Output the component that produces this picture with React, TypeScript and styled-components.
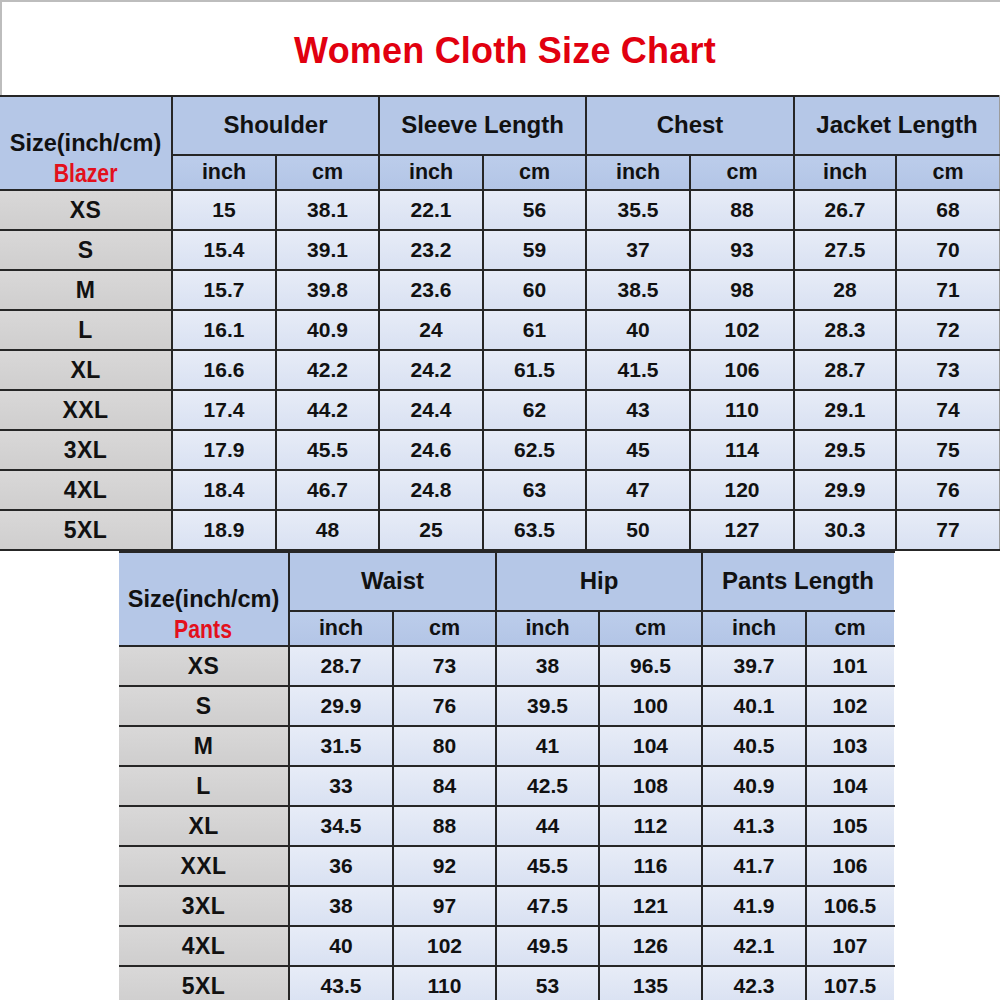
import React from 'react';
import styled, { createGlobalStyle } from 'styled-components';

const GlobalStyle = createGlobalStyle`
  html, body { margin: 0; padding: 0; background: #ffffff; }
  body { font-family: "Liberation Sans", Arial, sans-serif; }
`;

const Page = styled.div`
  width: 1000px;
  height: 1000px;
  overflow: hidden;
  background: #ffffff;
  display: flex;
  flex-direction: column;
`;

const TitleBar = styled.div`
  flex: none;
  height: 95px;
  box-sizing: border-box;
  border-top: 2px solid #bdbdbd;
  border-left: 2px solid #bdbdbd;
  display: flex;
  align-items: center;
  justify-content: center;
  padding-left: 8px;
  padding-top: 4px;
`;

const Title = styled.h1`
  margin: 0;
  font-size: 36px;
  font-weight: 700;
  color: #e1000f;
  letter-spacing: 0.2px;
`;

const Table = styled.table<{ $width: number; $offset: number; $edge: string }>`
  border-collapse: collapse;
  table-layout: fixed;
  width: ${p => p.$width}px;
  margin-left: ${p => p.$offset}px;
  flex: none;
  & td:last-child { border-right: 2px solid ${p => p.$edge}; }
`;

const Col = styled.col<{ $w: number }>`
  width: ${p => p.$w}px;
`;

const Row = styled.tr<{ $h: number }>`
  height: ${p => p.$h}px;
`;

const BaseCell = styled.td`
  border: 2px solid #262626;
  padding: 0;
  text-align: center;
  font-weight: 700;
  color: #111111;
  white-space: nowrap;
  &:first-child { border-left: none; }
`;

const SizeHead = styled(BaseCell)`
  background: #b5c7e7;
  vertical-align: top;
  padding-top: 31px;
  font-size: 23.5px;
  line-height: 30px;
`;

const Category = styled.span`
  display: inline-block;
  color: #e3101c;
  font-size: 25px;
  transform: scaleX(0.85);
  transform-origin: center;
`;

const GroupHead = styled(BaseCell)`
  background: #b5c7e7;
  font-size: 24px;
`;

const UnitHead = styled(BaseCell)`
  background: linear-gradient(#bccdeb, #b3c5e6);
  font-size: 21.5px;
`;

const SizeCell = styled(BaseCell)`
  background: linear-gradient(#d9d8d8, #cfcece);
  font-size: 23px;
  letter-spacing: 0.4px;
`;

const DataCell = styled(BaseCell)`
  background: linear-gradient(#e7ecf7, #d9e1f2);
  font-size: 21px;
`;

type Group = string;

const blazerGroups: Group[] = ['Shoulder', 'Sleeve Length', 'Chest', 'Jacket Length'];
const blazerCols = [172, 104, 103, 104, 103, 104, 104, 102, 104];
const blazerRows: string[][] = [
  ['XS', '15', '38.1', '22.1', '56', '35.5', '88', '26.7', '68'],
  ['S', '15.4', '39.1', '23.2', '59', '37', '93', '27.5', '70'],
  ['M', '15.7', '39.8', '23.6', '60', '38.5', '98', '28', '71'],
  ['L', '16.1', '40.9', '24', '61', '40', '102', '28.3', '72'],
  ['XL', '16.6', '42.2', '24.2', '61.5', '41.5', '106', '28.7', '73'],
  ['XXL', '17.4', '44.2', '24.4', '62', '43', '110', '29.1', '74'],
  ['3XL', '17.9', '45.5', '24.6', '62.5', '45', '114', '29.5', '75'],
  ['4XL', '18.4', '46.7', '24.8', '63', '47', '120', '29.9', '76'],
  ['5XL', '18.9', '48', '25', '63.5', '50', '127', '30.3', '77'],
];

const pantsGroups: Group[] = ['Waist', 'Hip', 'Pants Length'];
const pantsCols = [170, 104, 103, 103, 103, 104, 88];
const pantsRows: string[][] = [
  ['XS', '28.7', '73', '38', '96.5', '39.7', '101'],
  ['S', '29.9', '76', '39.5', '100', '40.1', '102'],
  ['M', '31.5', '80', '41', '104', '40.5', '103'],
  ['L', '33', '84', '42.5', '108', '40.9', '104'],
  ['XL', '34.5', '88', '44', '112', '41.3', '105'],
  ['XXL', '36', '92', '45.5', '116', '41.7', '106'],
  ['3XL', '38', '97', '47.5', '121', '41.9', '106.5'],
  ['4XL', '40', '102', '49.5', '126', '42.1', '107'],
  ['5XL', '43.5', '110', '53', '135', '42.3', '107.5'],
];

interface ChartProps {
  category: string;
  groups: Group[];
  cols: number[];
  rows: string[][];
  offset: number;
  edge: string;
}

function SizeTable({ category, groups, cols, rows, offset, edge }: ChartProps) {
  const width = cols.reduce((a, b) => a + b, 0);
  return (
    <Table $width={width} $offset={offset} $edge={edge}>
      <colgroup>
        {cols.map((w, i) => (
          <Col key={i} $w={w} />
        ))}
      </colgroup>
      <tbody>
        <Row $h={58}>
          <SizeHead rowSpan={2}>
            Size(inch/cm)
            <br />
            <Category>{category}</Category>
          </SizeHead>
          {groups.map(g => (
            <GroupHead key={g} colSpan={2}>
              {g}
            </GroupHead>
          ))}
        </Row>
        <Row $h={35}>
          {groups.map(g => (
            <React.Fragment key={g}>
              <UnitHead>inch</UnitHead>
              <UnitHead>cm</UnitHead>
            </React.Fragment>
          ))}
        </Row>
        {rows.map(r => (
          <Row key={r[0]} $h={40}>
            <SizeCell>{r[0]}</SizeCell>
            {r.slice(1).map((v, i) => (
              <DataCell key={i}>{v}</DataCell>
            ))}
          </Row>
        ))}
      </tbody>
    </Table>
  );
}

export default function App() {
  return (
    <Page>
      <GlobalStyle />
      <TitleBar>
        <Title>Women Cloth Size Chart</Title>
      </TitleBar>
      <SizeTable
        category="Blazer"
        groups={blazerGroups}
        cols={blazerCols}
        rows={blazerRows}
        offset={0}
        edge="#9c9c9c"
      />
      <SizeTable
        category="Pants"
        groups={pantsGroups}
        cols={pantsCols}
        rows={pantsRows}
        offset={119}
        edge="transparent"
      />
    </Page>
  );
}
